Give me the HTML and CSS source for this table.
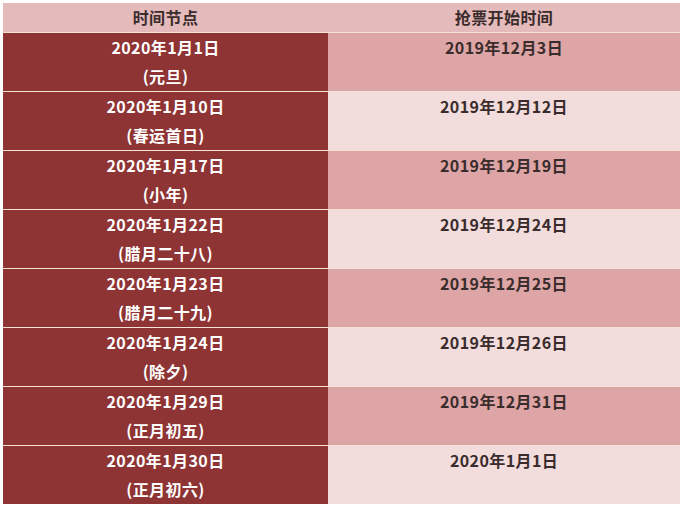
FILE: index.html
```html
<!DOCTYPE html>
<html lang="zh">
<head>
<meta charset="utf-8">
<link rel="stylesheet" href="styles.css">
</head>
<body>
<table class="schedule">
  <thead>
    <tr><th class="c-left">时间节点</th><th class="c-right">抢票开始时间</th></tr>
  </thead>
  <tbody>
    <tr class="dark"><td class="c-left">2020年1月1日<br>(元旦)</td><td class="c-right">2019年12月3日</td></tr>
    <tr class="light"><td class="c-left">2020年1月10日<br>(春运首日)</td><td class="c-right">2019年12月12日</td></tr>
    <tr class="dark"><td class="c-left">2020年1月17日<br>(小年)</td><td class="c-right">2019年12月19日</td></tr>
    <tr class="light"><td class="c-left">2020年1月22日<br>(腊月二十八)</td><td class="c-right">2019年12月24日</td></tr>
    <tr class="dark"><td class="c-left">2020年1月23日<br>(腊月二十九)</td><td class="c-right">2019年12月25日</td></tr>
    <tr class="light"><td class="c-left">2020年1月24日<br>(除夕)</td><td class="c-right">2019年12月26日</td></tr>
    <tr class="dark"><td class="c-left">2020年1月29日<br>(正月初五)</td><td class="c-right">2019年12月31日</td></tr>
    <tr class="light"><td class="c-left">2020年1月30日<br>(正月初六)</td><td class="c-right">2020年1月1日</td></tr>
  </tbody>
</table>
</body>
</html>
```
FILE: styles.css
```css
html, body {
  margin: 0;
  padding: 0;
  background: #ffffff;
}
body {
  padding: 3px;
  font-family: "Noto Sans CJK SC", "Noto Sans", sans-serif;
}
.schedule {
  border-collapse: collapse;
  border-spacing: 0;
  width: 677px;
  table-layout: fixed;
}
.schedule th,
.schedule td {
  padding: 0;
  text-align: center;
  vertical-align: top;
  font-size: 16px;
  font-weight: bold;
  line-height: 29px;
  letter-spacing: 0.4px;
}
.schedule th {
  height: 29px;
  background: #e5baba;
  color: #3a2c2c;
  border-bottom: 1px solid #f4e2d6;
}
.schedule td {
  height: 58px;
  border-bottom: 1px solid #f4e2d6;
}
.c-left {
  width: 325px;
}
.schedule td.c-left {
  background: #8e3434;
  color: #ffffff;
}
.schedule td.c-right {
  color: #3a2c2c;
}
.dark td.c-right {
  background: #dda5a5;
}
.light td.c-right {
  background: #f2dcdc;
}
.schedule tbody tr:last-child td {
  border-bottom: none;
}
```
